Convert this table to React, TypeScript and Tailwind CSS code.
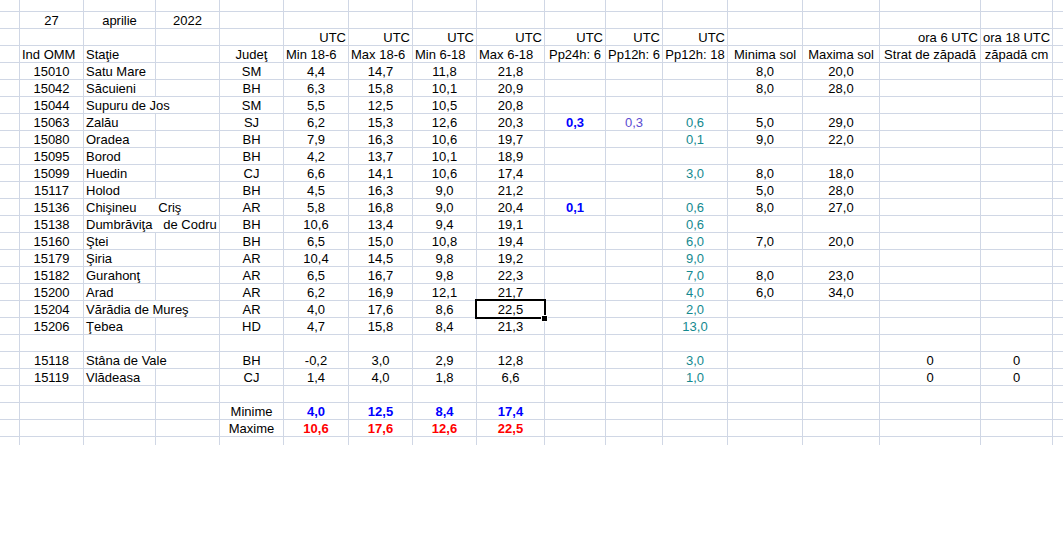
const COLS =
  "grid grid-cols-[20px_64px_72px_64px_64px_65px_64px_64px_68px_61px_57px_65px_75px_77px_101px_72px_1fr]";

type Cell = {
  t?: string;
  a?: "l" | "c" | "r";
  cls?: string;
  spill?: boolean;
  sel?: boolean;
};

const ALIGN = { l: "text-left", c: "text-center", r: "text-right" };

const STATIONS: { r: string[]; spill?: boolean; sel?: boolean }[] = [
  { r: ["15010", "Satu Mare", "SM", "4,4", "14,7", "11,8", "21,8", "", "", "", "8,0", "20,0"] },
  { r: ["15042", "Săcuieni", "BH", "6,3", "15,8", "10,1", "20,9", "", "", "", "8,0", "28,0"] },
  { r: ["15044", "Supuru de Jos", "SM", "5,5", "12,5", "10,5", "20,8"], spill: true },
  { r: ["15063", "Zalău", "SJ", "6,2", "15,3", "12,6", "20,3", "0,3", "0,3", "0,6", "5,0", "29,0"] },
  { r: ["15080", "Oradea", "BH", "7,9", "16,3", "10,6", "19,7", "", "", "0,1", "9,0", "22,0"] },
  { r: ["15095", "Borod", "BH", "4,2", "13,7", "10,1", "18,9"] },
  { r: ["15099", "Huedin", "CJ", "6,6", "14,1", "10,6", "17,4", "", "", "3,0", "8,0", "18,0"] },
  { r: ["15117", "Holod", "BH", "4,5", "16,3", "9,0", "21,2", "", "", "", "5,0", "28,0"] },
  { r: ["15136", "Chişineu      Criş", "AR", "5,8", "16,8", "9,0", "20,4", "0,1", "", "0,6", "8,0", "27,0"], spill: true },
  { r: ["15138", "Dumbrăviţa   de Codru", "BH", "10,6", "13,4", "9,4", "19,1", "", "", "0,6"], spill: true },
  { r: ["15160", "Ştei", "BH", "6,5", "15,0", "10,8", "19,4", "", "", "6,0", "7,0", "20,0"] },
  { r: ["15179", "Şiria", "AR", "10,4", "14,5", "9,8", "19,2", "", "", "9,0"] },
  { r: ["15182", "Gurahonţ", "AR", "6,5", "16,7", "9,8", "22,3", "", "", "7,0", "8,0", "23,0"] },
  { r: ["15200", "Arad", "AR", "6,2", "16,9", "12,1", "21,7", "", "", "4,0", "6,0", "34,0"] },
  { r: ["15204", "Vărădia de Mureş", "AR", "4,0", "17,6", "8,6", "22,5", "", "", "2,0"], spill: true, sel: true },
  { r: ["15206", "Ţebea", "HD", "4,7", "15,8", "8,4", "21,3", "", "", "13,0"] },
];

const MOUNTAIN: { r: string[]; spill?: boolean }[] = [
  { r: ["15118", "Stâna de Vale", "BH", "-0,2", "3,0", "2,9", "12,8", "", "", "3,0", "", "", "0", "0"], spill: true },
  { r: ["15119", "Vlădeasa", "CJ", "1,4", "4,0", "1,8", "6,6", "", "", "1,0", "", "", "0", "0"] },
];

function station(r: string[], spill?: boolean, sel?: boolean): Cell[] {
  const [id, name, jud, f, g, h, i, j, k, l, m, n, o, p] = r;
  return [
    {},
    { t: id, a: "c" },
    { t: name, a: "l", spill },
    {},
    { t: jud, a: "c" },
    { t: f, a: "c" },
    { t: g, a: "c" },
    { t: h, a: "c" },
    { t: i, a: "c", sel },
    { t: j, a: "c", cls: "font-bold text-[#0000ff]" },
    { t: k, a: "c", cls: "text-[#5b4bd1]" },
    { t: l, a: "c", cls: "text-[#14898f]" },
    { t: m, a: "c" },
    { t: n, a: "c" },
    { t: o, a: "c" },
    { t: p, a: "c" },
    {},
  ];
}

function Row({ cells = [], kind = "std" }: { cells?: Cell[]; kind?: "std" | "first" | "last" }) {
  const full: Cell[] = Array.from({ length: 17 }, (_, i) => cells[i] ?? {});
  const h =
    kind === "first"
      ? "h-[12px] border-b"
      : kind === "last"
        ? "h-[8px]"
        : "h-[17px] border-b";
  return (
    <div className={`${COLS} ${h} border-[#d0d7e5]`}>
      {full.map((c, i) => (
        <div
          key={i}
          className={`relative whitespace-pre px-[2px] leading-[17px] ${i < 16 ? "border-r" : ""} ${
            c.spill ? "border-transparent" : "border-[#d0d7e5]"
          } ${ALIGN[c.a ?? "l"]} ${c.cls ?? ""}`}
        >
          {c.t}
          {c.sel && (
            <>
              <div className="absolute -left-[2px] -top-[2px] z-10 h-[20px] w-[71px] border-2 border-black" />
              <div className="absolute left-[65px] top-[15px] z-20 h-[5px] w-[5px] bg-black outline outline-1 outline-white" />
            </>
          )}
        </div>
      ))}
    </div>
  );
}

export default function App() {
  const utc: Cell = { t: "UTC", a: "r" };
  const blue = "font-bold text-[#0000ff]";
  const red = "font-bold text-[#ff0000]";
  return (
    <div className="h-[540px] w-[1063px] overflow-hidden bg-white font-['Liberation_Sans',Arial,sans-serif] text-[13px] text-black">
      <Row kind="first" />
      <Row
        cells={[
          {},
          { t: "27", a: "c" },
          { t: "aprilie", a: "c" },
          { t: "2022", a: "c" },
        ]}
      />
      <Row
        cells={[
          {}, {}, {}, {}, {},
          utc, utc, utc, utc, utc, utc, utc,
          {}, {},
          { t: "ora 6 UTC", a: "r" },
          { t: "ora 18 UTC", a: "r" },
        ]}
      />
      <Row
        cells={[
          {},
          { t: "Ind OMM", a: "l" },
          { t: "Staţie", a: "l" },
          {},
          { t: "Judeţ", a: "c" },
          { t: "Min 18-6", a: "l" },
          { t: "Max 18-6", a: "l" },
          { t: "Min 6-18", a: "l" },
          { t: "Max 6-18", a: "l" },
          { t: "Pp24h: 6", a: "c" },
          { t: "Pp12h: 6", a: "c" },
          { t: "Pp12h: 18", a: "c" },
          { t: "Minima sol", a: "c" },
          { t: "Maxima sol", a: "c" },
          { t: "Strat de zăpadă", a: "c" },
          { t: "zăpadă cm", a: "c" },
        ]}
      />
      {STATIONS.map((s) => (
        <Row key={s.r[0]} cells={station(s.r, s.spill, s.sel)} />
      ))}
      <Row />
      {MOUNTAIN.map((s) => (
        <Row key={s.r[0]} cells={station(s.r, s.spill)} />
      ))}
      <Row />
      <Row
        cells={[
          {}, {}, {}, {},
          { t: "Minime", a: "c" },
          { t: "4,0", a: "c", cls: blue },
          { t: "12,5", a: "c", cls: blue },
          { t: "8,4", a: "c", cls: blue },
          { t: "17,4", a: "c", cls: blue },
        ]}
      />
      <Row
        cells={[
          {}, {}, {}, {},
          { t: "Maxime", a: "c" },
          { t: "10,6", a: "c", cls: red },
          { t: "17,6", a: "c", cls: red },
          { t: "12,6", a: "c", cls: red },
          { t: "22,5", a: "c", cls: red },
        ]}
      />
      <Row kind="last" />
    </div>
  );
}
